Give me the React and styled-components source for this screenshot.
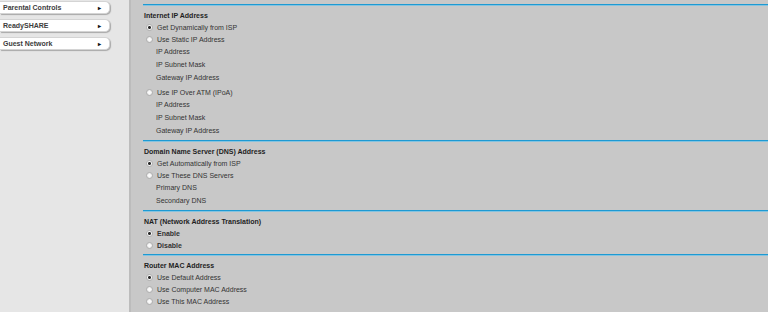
import React from "react";
import styled, { createGlobalStyle } from "styled-components";

const GlobalStyle = createGlobalStyle`
  html, body {
    margin: 0;
    padding: 0;
    background: #c8c8c8;
  }
  body {
    font-family: "Liberation Sans", Arial, sans-serif;
  }
`;

const menu = ["Parental Controls", "ReadySHARE", "Guest Network"];

const sections = [
  {
    title: "Internet IP Address",
    items: [
      { type: "radio", label: "Get Dynamically from ISP", checked: true },
      { type: "radio", label: "Use Static IP Address" },
      { type: "field", label: "IP Address" },
      { type: "field", label: "IP Subnet Mask" },
      { type: "field", label: "Gateway IP Address" },
      { type: "radio", label: "Use IP Over ATM (IPoA)", gap: 2 },
      { type: "field", label: "IP Address" },
      { type: "field", label: "IP Subnet Mask" },
      { type: "field", label: "Gateway IP Address" },
    ],
  },
  {
    title: "Domain Name Server (DNS) Address",
    items: [
      { type: "radio", label: "Get Automatically from ISP", checked: true },
      { type: "radio", label: "Use These DNS Servers" },
      { type: "field", label: "Primary DNS" },
      { type: "field", label: "Secondary DNS" },
    ],
  },
  {
    title: "NAT (Network Address Translation)",
    items: [
      { type: "radio", label: "Enable", checked: true, bold: true },
      { type: "radio", label: "Disable", bold: true },
    ],
  },
  {
    title: "Router MAC Address",
    items: [
      { type: "radio", label: "Use Default Address", checked: true },
      { type: "radio", label: "Use Computer MAC Address" },
      { type: "radio", label: "Use This MAC Address" },
    ],
  },
];

const App = () => {
  return (
    <Page>
      <GlobalStyle />
      <Sidebar>
        {menu.map((m) => (
          <MenuButton key={m}>
            <span>{m}</span>
            <Arrow>&#9656;</Arrow>
          </MenuButton>
        ))}
      </Sidebar>
      <Main>
        {sections.map((s) => (
          <Section key={s.title}>
            <Divider />
            <SectionTitle>{s.title}</SectionTitle>
            {s.items.map((it, i) =>
              it.type === "radio" ? (
                <RadioRow key={i} $gap={it.gap} $bold={it.bold}>
                  <Radio $checked={it.checked} />
                  {it.label}
                </RadioRow>
              ) : (
                <FieldLabel key={i}>{it.label}</FieldLabel>
              )
            )}
          </Section>
        ))}
      </Main>
    </Page>
  );
};

export default App;

const Page = styled.div`
  display: flex;
  width: 768px;
  height: 312px;
  overflow: hidden;
`;

const Sidebar = styled.div`
  width: 129px;
  flex-shrink: 0;
  background: #e6e6e6;
  border-right: 2px solid #bcbcbc;
  padding-top: 1px;
  display: flex;
  flex-direction: column;
  gap: 5px;
`;

const MenuButton = styled.div`
  width: 110px;
  height: 13px;
  box-sizing: border-box;
  display: flex;
  align-items: center;
  justify-content: space-between;
  padding: 0 8px 0 3px;
  background: #fff;
  border: 1px solid #d4d4d4;
  border-left: none;
  border-radius: 0 5px 5px 0;
  box-shadow: 1px 1px 1px #a8a8a8;
  font-size: 7px;
  font-weight: bold;
  color: #3c3c3c;
`;

const Arrow = styled.span`
  font-size: 6px;
  color: #111;
`;

const Main = styled.div`
  flex: 1;
  padding: 4px 0 0 12px;
  background: #c8c8c8;
  color: #2a2a2a;
  font-size: 7px;
`;

const Section = styled.div`
  display: flex;
  flex-direction: column;
  margin-bottom: 3px;
`;

const Divider = styled.div`
  height: 1px;
  background: #1d9ad3;
  border-bottom: 1px solid #86c3df;
  margin-bottom: 4px;
`;

const SectionTitle = styled.div`
  height: 11px;
  line-height: 11px;
  font-weight: bold;
  color: #1e1e1e;
  padding-left: 1px;
`;

const RadioRow = styled.div`
  height: 12px;
  display: flex;
  align-items: center;
  margin-top: ${(p) => p.$gap || 0}px;
  font-weight: ${(p) => (p.$bold ? "bold" : "normal")};
  color: #333;
`;

const Radio = styled.span`
  width: 7px;
  height: 7px;
  margin: 0 4px 0 3px;
  border-radius: 50%;
  box-sizing: border-box;
  border: 1px solid #b0b0b0;
  background: ${(p) =>
    p.$checked
      ? "radial-gradient(circle, #2a2a2a 0 1.2px, #f6f6f6 1.7px)"
      : "radial-gradient(circle, #fafafa 0 1px, #e2e2e2 3px)"};
`;

const FieldLabel = styled.div`
  height: 13px;
  line-height: 13px;
  padding-left: 13px;
  color: #333;
`;
